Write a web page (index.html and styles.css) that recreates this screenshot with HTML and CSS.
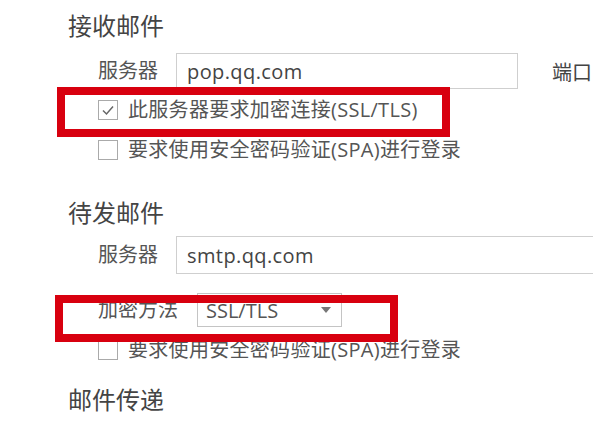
FILE: index.html
```html
<!DOCTYPE html>
<html lang="zh-CN">
<head>
<meta charset="utf-8">
<title>账户设置</title>
<link rel="stylesheet" href="styles.css">
</head>
<body>
<div class="page">
  <h2 class="section first">接收邮件</h2>
  <div class="row row-pop">
    <span class="label">服务器</span>
    <div class="input input-pop">pop.qq.com</div>
    <span class="port">端口</span>
  </div>
  <div class="check-row cr1">
    <span class="cb"><svg width="20" height="20" viewBox="0 0 20 20"><path d="M5 10.5 L8.5 14 L15 6.5" fill="none" stroke="#666" stroke-width="1.5"/></svg></span>
    <span class="cb-text">此服务器要求加密连接(SSL/TLS)</span>
  </div>
  <div class="check-row cr2">
    <span class="cb"></span>
    <span class="cb-text">要求使用安全密码验证(SPA)进行登录</span>
  </div>

  <h2 class="section second">待发邮件</h2>
  <div class="row row-smtp">
    <span class="label">服务器</span>
    <div class="input input-smtp">smtp.qq.com</div>
  </div>
  <div class="row row-enc">
    <span class="label">加密方法</span>
    <div class="select"><span>SSL/TLS</span><span class="arrow"></span></div>
  </div>
  <div class="check-row cr3">
    <span class="cb"></span>
    <span class="cb-text">要求使用安全密码验证(SPA)进行登录</span>
  </div>

  <h2 class="section third">邮件传递</h2>

  <div class="mark mark1"></div>
  <div class="mark mark2"></div>
</div>
</body>
</html>
```

FILE: styles.css
```css
html, body {
  margin: 0;
  padding: 0;
  background: #fff;
  overflow: hidden;
}
body {
  width: 593px;
  height: 426px;
  font-family: "Open Sans", "Noto Sans CJK SC", sans-serif;
  color: #555;
}
.page {
  position: relative;
  width: 593px;
  height: 426px;
  padding: 10px 0 0 68px;
  box-sizing: border-box;
}
.section {
  margin: 0;
  font-size: 24px;
  line-height: 32px;
  height: 32px;
  font-weight: normal;
  color: #444;
  white-space: nowrap;
}
.section.second { margin-top: 33px; }
.section.third { margin-top: 20px; }

.row {
  display: flex;
  align-items: center;
  gap: 18px;
  padding-left: 30px;
  white-space: nowrap;
}
.label {
  font-size: 20px;
  line-height: 28px;
  color: #555;
}
.row-pop { margin-top: 11px; height: 36px; }
.row-smtp { margin-top: 7px; height: 38px; }
.row-enc { margin-top: 19px; height: 34px; gap: 19px; }

.input {
  box-sizing: border-box;
  border: 1px solid #cfcfcf;
  background: #fff;
  font-size: 20px;
  letter-spacing: 0.4px;
  color: #444;
  padding-left: 10px;
  display: flex;
  align-items: center;
}
.input-pop { width: 342px; height: 36px; }
.input-smtp { width: 440px; height: 38px; flex: none; }
.port {
  margin-left: 16px;
  font-size: 20px;
  color: #444;
}
.select {
  box-sizing: border-box;
  width: 145px;
  height: 34px;
  border: 1px solid #c4c4c4;
  display: flex;
  align-items: center;
  justify-content: space-between;
  padding: 0 10px 0 8px;
  font-size: 20px;
  color: #555;
}
.arrow {
  width: 0;
  height: 0;
  border-left: 5px solid transparent;
  border-right: 5px solid transparent;
  border-top: 6px solid #777;
}

.check-row {
  display: flex;
  align-items: center;
  gap: 10px;
  height: 28px;
  padding-left: 30px;
  white-space: nowrap;
}
.cr1 { margin-top: 7px; }
.cr2 { margin-top: 12px; }
.cr3 { margin-top: 9px; }
.cb {
  box-sizing: border-box;
  width: 20px;
  height: 20px;
  border: 1px solid #aaa;
  background: #fff;
  flex: none;
  display: flex;
}
.cb svg { margin: -1px; }
.cb-text {
  font-size: 20px;
  line-height: 28px;
  letter-spacing: 0.3px;
  color: #555;
}

.mark {
  position: absolute;
  box-sizing: border-box;
  border: 8px solid #d8000f;
}
.mark1 { left: 57px; top: 87px; width: 393px; height: 50px; }
.mark2 { left: 55px; top: 295px; width: 343px; height: 47px; }
```
